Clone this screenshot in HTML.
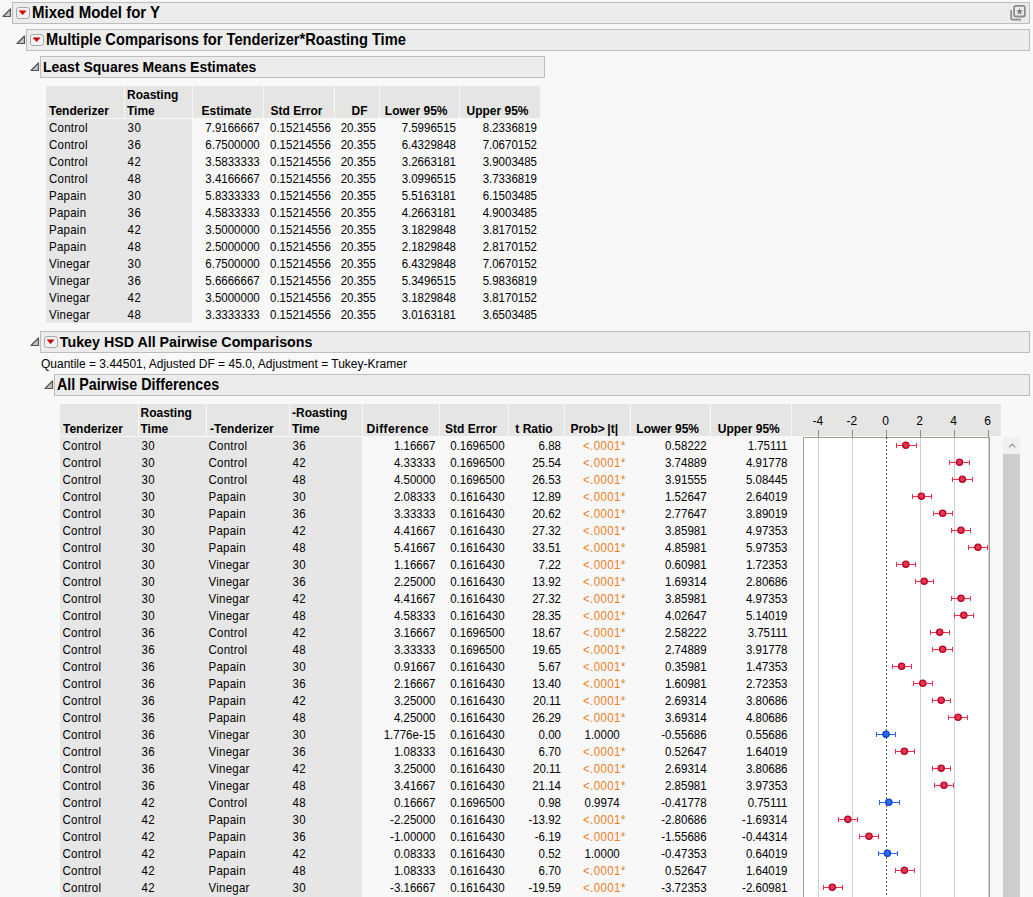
<!DOCTYPE html>
<html><head><meta charset="utf-8"><style>
html,body{margin:0;padding:0;}
body{width:1033px;height:897px;overflow:hidden;position:relative;background:#f8f8f8;font-family:"Liberation Sans", sans-serif;color:#000;}
.a{position:absolute;}
.t{position:absolute;white-space:nowrap;}
.ob{position:absolute;background:#ececec;border:1px solid #bdbdbd;}
</style></head><body>
<div class="ob" style="left:12px;top:2px;width:1016px;height:20px"></div>
<svg class="a" style="left:2px;top:8px" width="10" height="10" viewBox="0 0 10 10"><path d="M1 8.5 L8.5 1 L8.5 8.5 Z" fill="#c4c4c4" stroke="#555" stroke-width="1.2" stroke-linejoin="round"/></svg>
<svg class="a" style="left:16px;top:7px" width="14" height="12" viewBox="0 0 14 12"><rect x="0.5" y="0.5" width="13" height="11" rx="2.5" fill="#f2f2f2" stroke="#a9a9a9"/><path d="M2.6 3.6 L10.6 3.6 L6.6 8 Z" fill="#d00000"/></svg>
<div class="t" style="left:32px;top:1.80px;font-size:15px;line-height:22px;transform:scaleY(1.07);transform-origin:0 16.20px;font-weight:bold;">Mixed Model for Y</div>
<svg class="a" style="left:1010px;top:4px" width="18" height="18" viewBox="0 0 18 18"><path d="M1.1 6 V14.6 Q1.1 15.7 2.2 15.7 H11" fill="none" stroke="#8c8c8c" stroke-width="1.7" stroke-linecap="butt"/><rect x="4.1" y="1.9" width="10.7" height="10.6" rx="1.6" fill="#eeeeee" stroke="#8c8c8c" stroke-width="1.8"/><path d="M9.60 3.90 L10.51 6.35 L13.12 6.46 L11.07 8.08 L11.77 10.59 L9.60 9.15 L7.43 10.59 L8.13 8.08 L6.08 6.46 L8.69 6.35 Z" fill="#7c7c7c"/></svg>
<div class="ob" style="left:26px;top:29px;width:1002px;height:20px"></div>
<svg class="a" style="left:16px;top:35px" width="10" height="10" viewBox="0 0 10 10"><path d="M1 8.5 L8.5 1 L8.5 8.5 Z" fill="#c4c4c4" stroke="#555" stroke-width="1.2" stroke-linejoin="round"/></svg>
<svg class="a" style="left:30px;top:34px" width="14" height="12" viewBox="0 0 14 12"><rect x="0.5" y="0.5" width="13" height="11" rx="2.5" fill="#f2f2f2" stroke="#a9a9a9"/><path d="M2.6 3.6 L10.6 3.6 L6.6 8 Z" fill="#d00000"/></svg>
<div class="t" style="left:46px;top:28.92px;font-size:14.65px;line-height:22px;transform:scaleY(1.07);transform-origin:0 16.08px;font-weight:bold;">Multiple Comparisons for Tenderizer*Roasting Time</div>
<div class="ob" style="left:40px;top:56px;width:503px;height:20px"></div>
<svg class="a" style="left:30px;top:62px" width="10" height="10" viewBox="0 0 10 10"><path d="M1 8.5 L8.5 1 L8.5 8.5 Z" fill="#c4c4c4" stroke="#555" stroke-width="1.2" stroke-linejoin="round"/></svg>
<div class="t" style="left:43px;top:56.65px;font-size:14px;line-height:21px;transform:scaleY(1.11);transform-origin:0 15.35px;font-weight:bold;">Least Squares Means Estimates</div>
<div class="a" style="left:46px;top:86px;width:78px;height:32px;background:#e5e5e3"></div>
<div class="a" style="left:125px;top:86px;width:67px;height:32px;background:#e5e5e3"></div>
<div class="a" style="left:193px;top:86px;width:70px;height:32px;background:#e5e5e3"></div>
<div class="a" style="left:264px;top:86px;width:70px;height:32px;background:#e5e5e3"></div>
<div class="a" style="left:335px;top:86px;width:44px;height:32px;background:#e5e5e3"></div>
<div class="a" style="left:380px;top:86px;width:79px;height:32px;background:#e5e5e3"></div>
<div class="a" style="left:460px;top:86px;width:80px;height:32px;background:#e5e5e3"></div>
<div class="a" style="left:46px;top:119px;width:146px;height:204px;background:#e6e6e6"></div>
<div class="t" style="left:49px;top:101.84px;font-size:12px;line-height:18px;font-weight:bold;">Tenderizer</div>
<div class="t" style="left:127px;top:85.84px;font-size:12px;line-height:18px;font-weight:bold;">Roasting</div>
<div class="t" style="left:127px;top:101.84px;font-size:12px;line-height:18px;font-weight:bold;">Time</div>
<div class="t" style="left:51.5px;top:101.84px;font-size:12px;line-height:18px;font-weight:bold;width:200px;text-align:right;">Estimate</div>
<div class="t" style="left:122.5px;top:101.84px;font-size:12px;line-height:18px;font-weight:bold;width:200px;text-align:right;">Std Error</div>
<div class="t" style="left:167.5px;top:101.84px;font-size:12px;line-height:18px;font-weight:bold;width:200px;text-align:right;">DF</div>
<div class="t" style="left:247.5px;top:101.84px;font-size:12px;line-height:18px;font-weight:bold;width:200px;text-align:right;">Lower 95%</div>
<div class="t" style="left:328.5px;top:101.84px;font-size:12px;line-height:18px;font-weight:bold;width:200px;text-align:right;">Upper 95%</div>
<div class="t" style="left:49px;top:119.51px;font-size:11.5px;line-height:17px;transform:scaleY(1.09);transform-origin:0 12.49px;letter-spacing:0.25px;">Control</div>
<div class="t" style="left:127.5px;top:119.51px;font-size:11.5px;line-height:17px;transform:scaleY(1.09);transform-origin:0 12.49px;letter-spacing:0.5px;">30</div>
<div class="t" style="left:59.69999999999999px;top:119.51px;font-size:11.5px;line-height:17px;transform:scaleY(1.09);transform-origin:0 12.49px;width:200px;text-align:right;">7.9166667</div>
<div class="t" style="left:130.8px;top:119.51px;font-size:11.5px;line-height:17px;transform:scaleY(1.09);transform-origin:0 12.49px;width:200px;text-align:right;">0.15214556</div>
<div class="t" style="left:175.89999999999998px;top:119.51px;font-size:11.5px;line-height:17px;transform:scaleY(1.09);transform-origin:0 12.49px;width:200px;text-align:right;">20.355</div>
<div class="t" style="left:256px;top:119.51px;font-size:11.5px;line-height:17px;transform:scaleY(1.09);transform-origin:0 12.49px;width:200px;text-align:right;">7.5996515</div>
<div class="t" style="left:337px;top:119.51px;font-size:11.5px;line-height:17px;transform:scaleY(1.09);transform-origin:0 12.49px;width:200px;text-align:right;">8.2336819</div>
<div class="t" style="left:49px;top:136.51px;font-size:11.5px;line-height:17px;transform:scaleY(1.09);transform-origin:0 12.49px;letter-spacing:0.25px;">Control</div>
<div class="t" style="left:127.5px;top:136.51px;font-size:11.5px;line-height:17px;transform:scaleY(1.09);transform-origin:0 12.49px;letter-spacing:0.5px;">36</div>
<div class="t" style="left:59.69999999999999px;top:136.51px;font-size:11.5px;line-height:17px;transform:scaleY(1.09);transform-origin:0 12.49px;width:200px;text-align:right;">6.7500000</div>
<div class="t" style="left:130.8px;top:136.51px;font-size:11.5px;line-height:17px;transform:scaleY(1.09);transform-origin:0 12.49px;width:200px;text-align:right;">0.15214556</div>
<div class="t" style="left:175.89999999999998px;top:136.51px;font-size:11.5px;line-height:17px;transform:scaleY(1.09);transform-origin:0 12.49px;width:200px;text-align:right;">20.355</div>
<div class="t" style="left:256px;top:136.51px;font-size:11.5px;line-height:17px;transform:scaleY(1.09);transform-origin:0 12.49px;width:200px;text-align:right;">6.4329848</div>
<div class="t" style="left:337px;top:136.51px;font-size:11.5px;line-height:17px;transform:scaleY(1.09);transform-origin:0 12.49px;width:200px;text-align:right;">7.0670152</div>
<div class="t" style="left:49px;top:153.51px;font-size:11.5px;line-height:17px;transform:scaleY(1.09);transform-origin:0 12.49px;letter-spacing:0.25px;">Control</div>
<div class="t" style="left:127.5px;top:153.51px;font-size:11.5px;line-height:17px;transform:scaleY(1.09);transform-origin:0 12.49px;letter-spacing:0.5px;">42</div>
<div class="t" style="left:59.69999999999999px;top:153.51px;font-size:11.5px;line-height:17px;transform:scaleY(1.09);transform-origin:0 12.49px;width:200px;text-align:right;">3.5833333</div>
<div class="t" style="left:130.8px;top:153.51px;font-size:11.5px;line-height:17px;transform:scaleY(1.09);transform-origin:0 12.49px;width:200px;text-align:right;">0.15214556</div>
<div class="t" style="left:175.89999999999998px;top:153.51px;font-size:11.5px;line-height:17px;transform:scaleY(1.09);transform-origin:0 12.49px;width:200px;text-align:right;">20.355</div>
<div class="t" style="left:256px;top:153.51px;font-size:11.5px;line-height:17px;transform:scaleY(1.09);transform-origin:0 12.49px;width:200px;text-align:right;">3.2663181</div>
<div class="t" style="left:337px;top:153.51px;font-size:11.5px;line-height:17px;transform:scaleY(1.09);transform-origin:0 12.49px;width:200px;text-align:right;">3.9003485</div>
<div class="t" style="left:49px;top:170.51px;font-size:11.5px;line-height:17px;transform:scaleY(1.09);transform-origin:0 12.49px;letter-spacing:0.25px;">Control</div>
<div class="t" style="left:127.5px;top:170.51px;font-size:11.5px;line-height:17px;transform:scaleY(1.09);transform-origin:0 12.49px;letter-spacing:0.5px;">48</div>
<div class="t" style="left:59.69999999999999px;top:170.51px;font-size:11.5px;line-height:17px;transform:scaleY(1.09);transform-origin:0 12.49px;width:200px;text-align:right;">3.4166667</div>
<div class="t" style="left:130.8px;top:170.51px;font-size:11.5px;line-height:17px;transform:scaleY(1.09);transform-origin:0 12.49px;width:200px;text-align:right;">0.15214556</div>
<div class="t" style="left:175.89999999999998px;top:170.51px;font-size:11.5px;line-height:17px;transform:scaleY(1.09);transform-origin:0 12.49px;width:200px;text-align:right;">20.355</div>
<div class="t" style="left:256px;top:170.51px;font-size:11.5px;line-height:17px;transform:scaleY(1.09);transform-origin:0 12.49px;width:200px;text-align:right;">3.0996515</div>
<div class="t" style="left:337px;top:170.51px;font-size:11.5px;line-height:17px;transform:scaleY(1.09);transform-origin:0 12.49px;width:200px;text-align:right;">3.7336819</div>
<div class="t" style="left:49px;top:187.51px;font-size:11.5px;line-height:17px;transform:scaleY(1.09);transform-origin:0 12.49px;letter-spacing:0.25px;">Papain</div>
<div class="t" style="left:127.5px;top:187.51px;font-size:11.5px;line-height:17px;transform:scaleY(1.09);transform-origin:0 12.49px;letter-spacing:0.5px;">30</div>
<div class="t" style="left:59.69999999999999px;top:187.51px;font-size:11.5px;line-height:17px;transform:scaleY(1.09);transform-origin:0 12.49px;width:200px;text-align:right;">5.8333333</div>
<div class="t" style="left:130.8px;top:187.51px;font-size:11.5px;line-height:17px;transform:scaleY(1.09);transform-origin:0 12.49px;width:200px;text-align:right;">0.15214556</div>
<div class="t" style="left:175.89999999999998px;top:187.51px;font-size:11.5px;line-height:17px;transform:scaleY(1.09);transform-origin:0 12.49px;width:200px;text-align:right;">20.355</div>
<div class="t" style="left:256px;top:187.51px;font-size:11.5px;line-height:17px;transform:scaleY(1.09);transform-origin:0 12.49px;width:200px;text-align:right;">5.5163181</div>
<div class="t" style="left:337px;top:187.51px;font-size:11.5px;line-height:17px;transform:scaleY(1.09);transform-origin:0 12.49px;width:200px;text-align:right;">6.1503485</div>
<div class="t" style="left:49px;top:204.51px;font-size:11.5px;line-height:17px;transform:scaleY(1.09);transform-origin:0 12.49px;letter-spacing:0.25px;">Papain</div>
<div class="t" style="left:127.5px;top:204.51px;font-size:11.5px;line-height:17px;transform:scaleY(1.09);transform-origin:0 12.49px;letter-spacing:0.5px;">36</div>
<div class="t" style="left:59.69999999999999px;top:204.51px;font-size:11.5px;line-height:17px;transform:scaleY(1.09);transform-origin:0 12.49px;width:200px;text-align:right;">4.5833333</div>
<div class="t" style="left:130.8px;top:204.51px;font-size:11.5px;line-height:17px;transform:scaleY(1.09);transform-origin:0 12.49px;width:200px;text-align:right;">0.15214556</div>
<div class="t" style="left:175.89999999999998px;top:204.51px;font-size:11.5px;line-height:17px;transform:scaleY(1.09);transform-origin:0 12.49px;width:200px;text-align:right;">20.355</div>
<div class="t" style="left:256px;top:204.51px;font-size:11.5px;line-height:17px;transform:scaleY(1.09);transform-origin:0 12.49px;width:200px;text-align:right;">4.2663181</div>
<div class="t" style="left:337px;top:204.51px;font-size:11.5px;line-height:17px;transform:scaleY(1.09);transform-origin:0 12.49px;width:200px;text-align:right;">4.9003485</div>
<div class="t" style="left:49px;top:221.51px;font-size:11.5px;line-height:17px;transform:scaleY(1.09);transform-origin:0 12.49px;letter-spacing:0.25px;">Papain</div>
<div class="t" style="left:127.5px;top:221.51px;font-size:11.5px;line-height:17px;transform:scaleY(1.09);transform-origin:0 12.49px;letter-spacing:0.5px;">42</div>
<div class="t" style="left:59.69999999999999px;top:221.51px;font-size:11.5px;line-height:17px;transform:scaleY(1.09);transform-origin:0 12.49px;width:200px;text-align:right;">3.5000000</div>
<div class="t" style="left:130.8px;top:221.51px;font-size:11.5px;line-height:17px;transform:scaleY(1.09);transform-origin:0 12.49px;width:200px;text-align:right;">0.15214556</div>
<div class="t" style="left:175.89999999999998px;top:221.51px;font-size:11.5px;line-height:17px;transform:scaleY(1.09);transform-origin:0 12.49px;width:200px;text-align:right;">20.355</div>
<div class="t" style="left:256px;top:221.51px;font-size:11.5px;line-height:17px;transform:scaleY(1.09);transform-origin:0 12.49px;width:200px;text-align:right;">3.1829848</div>
<div class="t" style="left:337px;top:221.51px;font-size:11.5px;line-height:17px;transform:scaleY(1.09);transform-origin:0 12.49px;width:200px;text-align:right;">3.8170152</div>
<div class="t" style="left:49px;top:238.51px;font-size:11.5px;line-height:17px;transform:scaleY(1.09);transform-origin:0 12.49px;letter-spacing:0.25px;">Papain</div>
<div class="t" style="left:127.5px;top:238.51px;font-size:11.5px;line-height:17px;transform:scaleY(1.09);transform-origin:0 12.49px;letter-spacing:0.5px;">48</div>
<div class="t" style="left:59.69999999999999px;top:238.51px;font-size:11.5px;line-height:17px;transform:scaleY(1.09);transform-origin:0 12.49px;width:200px;text-align:right;">2.5000000</div>
<div class="t" style="left:130.8px;top:238.51px;font-size:11.5px;line-height:17px;transform:scaleY(1.09);transform-origin:0 12.49px;width:200px;text-align:right;">0.15214556</div>
<div class="t" style="left:175.89999999999998px;top:238.51px;font-size:11.5px;line-height:17px;transform:scaleY(1.09);transform-origin:0 12.49px;width:200px;text-align:right;">20.355</div>
<div class="t" style="left:256px;top:238.51px;font-size:11.5px;line-height:17px;transform:scaleY(1.09);transform-origin:0 12.49px;width:200px;text-align:right;">2.1829848</div>
<div class="t" style="left:337px;top:238.51px;font-size:11.5px;line-height:17px;transform:scaleY(1.09);transform-origin:0 12.49px;width:200px;text-align:right;">2.8170152</div>
<div class="t" style="left:49px;top:255.51px;font-size:11.5px;line-height:17px;transform:scaleY(1.09);transform-origin:0 12.49px;letter-spacing:0.25px;">Vinegar</div>
<div class="t" style="left:127.5px;top:255.51px;font-size:11.5px;line-height:17px;transform:scaleY(1.09);transform-origin:0 12.49px;letter-spacing:0.5px;">30</div>
<div class="t" style="left:59.69999999999999px;top:255.51px;font-size:11.5px;line-height:17px;transform:scaleY(1.09);transform-origin:0 12.49px;width:200px;text-align:right;">6.7500000</div>
<div class="t" style="left:130.8px;top:255.51px;font-size:11.5px;line-height:17px;transform:scaleY(1.09);transform-origin:0 12.49px;width:200px;text-align:right;">0.15214556</div>
<div class="t" style="left:175.89999999999998px;top:255.51px;font-size:11.5px;line-height:17px;transform:scaleY(1.09);transform-origin:0 12.49px;width:200px;text-align:right;">20.355</div>
<div class="t" style="left:256px;top:255.51px;font-size:11.5px;line-height:17px;transform:scaleY(1.09);transform-origin:0 12.49px;width:200px;text-align:right;">6.4329848</div>
<div class="t" style="left:337px;top:255.51px;font-size:11.5px;line-height:17px;transform:scaleY(1.09);transform-origin:0 12.49px;width:200px;text-align:right;">7.0670152</div>
<div class="t" style="left:49px;top:272.51px;font-size:11.5px;line-height:17px;transform:scaleY(1.09);transform-origin:0 12.49px;letter-spacing:0.25px;">Vinegar</div>
<div class="t" style="left:127.5px;top:272.51px;font-size:11.5px;line-height:17px;transform:scaleY(1.09);transform-origin:0 12.49px;letter-spacing:0.5px;">36</div>
<div class="t" style="left:59.69999999999999px;top:272.51px;font-size:11.5px;line-height:17px;transform:scaleY(1.09);transform-origin:0 12.49px;width:200px;text-align:right;">5.6666667</div>
<div class="t" style="left:130.8px;top:272.51px;font-size:11.5px;line-height:17px;transform:scaleY(1.09);transform-origin:0 12.49px;width:200px;text-align:right;">0.15214556</div>
<div class="t" style="left:175.89999999999998px;top:272.51px;font-size:11.5px;line-height:17px;transform:scaleY(1.09);transform-origin:0 12.49px;width:200px;text-align:right;">20.355</div>
<div class="t" style="left:256px;top:272.51px;font-size:11.5px;line-height:17px;transform:scaleY(1.09);transform-origin:0 12.49px;width:200px;text-align:right;">5.3496515</div>
<div class="t" style="left:337px;top:272.51px;font-size:11.5px;line-height:17px;transform:scaleY(1.09);transform-origin:0 12.49px;width:200px;text-align:right;">5.9836819</div>
<div class="t" style="left:49px;top:289.51px;font-size:11.5px;line-height:17px;transform:scaleY(1.09);transform-origin:0 12.49px;letter-spacing:0.25px;">Vinegar</div>
<div class="t" style="left:127.5px;top:289.51px;font-size:11.5px;line-height:17px;transform:scaleY(1.09);transform-origin:0 12.49px;letter-spacing:0.5px;">42</div>
<div class="t" style="left:59.69999999999999px;top:289.51px;font-size:11.5px;line-height:17px;transform:scaleY(1.09);transform-origin:0 12.49px;width:200px;text-align:right;">3.5000000</div>
<div class="t" style="left:130.8px;top:289.51px;font-size:11.5px;line-height:17px;transform:scaleY(1.09);transform-origin:0 12.49px;width:200px;text-align:right;">0.15214556</div>
<div class="t" style="left:175.89999999999998px;top:289.51px;font-size:11.5px;line-height:17px;transform:scaleY(1.09);transform-origin:0 12.49px;width:200px;text-align:right;">20.355</div>
<div class="t" style="left:256px;top:289.51px;font-size:11.5px;line-height:17px;transform:scaleY(1.09);transform-origin:0 12.49px;width:200px;text-align:right;">3.1829848</div>
<div class="t" style="left:337px;top:289.51px;font-size:11.5px;line-height:17px;transform:scaleY(1.09);transform-origin:0 12.49px;width:200px;text-align:right;">3.8170152</div>
<div class="t" style="left:49px;top:306.51px;font-size:11.5px;line-height:17px;transform:scaleY(1.09);transform-origin:0 12.49px;letter-spacing:0.25px;">Vinegar</div>
<div class="t" style="left:127.5px;top:306.51px;font-size:11.5px;line-height:17px;transform:scaleY(1.09);transform-origin:0 12.49px;letter-spacing:0.5px;">48</div>
<div class="t" style="left:59.69999999999999px;top:306.51px;font-size:11.5px;line-height:17px;transform:scaleY(1.09);transform-origin:0 12.49px;width:200px;text-align:right;">3.3333333</div>
<div class="t" style="left:130.8px;top:306.51px;font-size:11.5px;line-height:17px;transform:scaleY(1.09);transform-origin:0 12.49px;width:200px;text-align:right;">0.15214556</div>
<div class="t" style="left:175.89999999999998px;top:306.51px;font-size:11.5px;line-height:17px;transform:scaleY(1.09);transform-origin:0 12.49px;width:200px;text-align:right;">20.355</div>
<div class="t" style="left:256px;top:306.51px;font-size:11.5px;line-height:17px;transform:scaleY(1.09);transform-origin:0 12.49px;width:200px;text-align:right;">3.0163181</div>
<div class="t" style="left:337px;top:306.51px;font-size:11.5px;line-height:17px;transform:scaleY(1.09);transform-origin:0 12.49px;width:200px;text-align:right;">3.6503485</div>
<div class="ob" style="left:40px;top:331px;width:988px;height:20px"></div>
<svg class="a" style="left:30px;top:337px" width="10" height="10" viewBox="0 0 10 10"><path d="M1 8.5 L8.5 1 L8.5 8.5 Z" fill="#c4c4c4" stroke="#555" stroke-width="1.2" stroke-linejoin="round"/></svg>
<svg class="a" style="left:44px;top:336px" width="14" height="12" viewBox="0 0 14 12"><rect x="0.5" y="0.5" width="13" height="11" rx="2.5" fill="#f2f2f2" stroke="#a9a9a9"/><path d="M2.6 3.6 L10.6 3.6 L6.6 8 Z" fill="#d00000"/></svg>
<div class="t" style="left:59.8px;top:331.56px;font-size:14.25px;line-height:21px;transform:scaleY(1.07);transform-origin:0 15.44px;font-weight:bold;">Tukey HSD All Pairwise Comparisons</div>
<div class="t" style="left:41px;top:354.84px;font-size:12px;line-height:18px;">Quantile = 3.44501, Adjusted DF = 45.0, Adjustment = Tukey-Kramer</div>
<div class="ob" style="left:54px;top:374px;width:974px;height:20px"></div>
<svg class="a" style="left:44px;top:380px" width="10" height="10" viewBox="0 0 10 10"><path d="M1 8.5 L8.5 1 L8.5 8.5 Z" fill="#c4c4c4" stroke="#555" stroke-width="1.2" stroke-linejoin="round"/></svg>
<div class="t" style="left:57px;top:374.54px;font-size:14.3px;line-height:21px;transform:scaleY(1.1);transform-origin:0 15.46px;font-weight:bold;">All Pairwise Differences</div>
<div class="a" style="left:60px;top:404px;width:78px;height:32px;background:#e5e5e3"></div>
<div class="a" style="left:139px;top:404px;width:67px;height:32px;background:#e5e5e3"></div>
<div class="a" style="left:207px;top:404px;width:82px;height:32px;background:#e5e5e3"></div>
<div class="a" style="left:290px;top:404px;width:72px;height:32px;background:#e5e5e3"></div>
<div class="a" style="left:363px;top:404px;width:76px;height:32px;background:#e5e5e3"></div>
<div class="a" style="left:440px;top:404px;width:68px;height:32px;background:#e5e5e3"></div>
<div class="a" style="left:509px;top:404px;width:55px;height:32px;background:#e5e5e3"></div>
<div class="a" style="left:565px;top:404px;width:65px;height:32px;background:#e5e5e3"></div>
<div class="a" style="left:631px;top:404px;width:79px;height:32px;background:#e5e5e3"></div>
<div class="a" style="left:711px;top:404px;width:80px;height:32px;background:#e5e5e3"></div>
<div class="a" style="left:792px;top:404px;width:209px;height:32px;background:#e5e5e3"></div>
<div class="a" style="left:60px;top:437px;width:302px;height:460px;background:#e6e6e6"></div>
<div class="t" style="left:63px;top:419.84px;font-size:12px;line-height:18px;font-weight:bold;">Tenderizer</div>
<div class="t" style="left:140.5px;top:403.84px;font-size:12px;line-height:18px;font-weight:bold;">Roasting</div>
<div class="t" style="left:140.5px;top:419.84px;font-size:12px;line-height:18px;font-weight:bold;">Time</div>
<div class="t" style="left:210px;top:419.84px;font-size:12px;line-height:18px;font-weight:bold;">-Tenderizer</div>
<div class="t" style="left:292px;top:403.84px;font-size:12px;line-height:18px;font-weight:bold;">-Roasting</div>
<div class="t" style="left:292px;top:419.84px;font-size:12px;line-height:18px;font-weight:bold;">Time</div>
<div class="t" style="left:228.7px;top:419.84px;font-size:12px;line-height:18px;font-weight:bold;width:200px;text-align:right;"><span style="letter-spacing:0.35px">Difference</span></div>
<div class="t" style="left:297px;top:419.84px;font-size:12px;line-height:18px;font-weight:bold;width:200px;text-align:right;">Std Error</div>
<div class="t" style="left:352.70000000000005px;top:419.84px;font-size:12px;line-height:18px;font-weight:bold;width:200px;text-align:right;">t Ratio</div>
<div class="t" style="left:418px;top:419.84px;font-size:12px;line-height:18px;font-weight:bold;width:200px;text-align:right;">Prob&gt;<span style="margin-left:2.5px">|t|</span></div>
<div class="t" style="left:499px;top:419.84px;font-size:12px;line-height:18px;font-weight:bold;width:200px;text-align:right;">Lower 95%</div>
<div class="t" style="left:579.8px;top:419.84px;font-size:12px;line-height:18px;font-weight:bold;width:200px;text-align:right;">Upper 95%</div>
<div class="t" style="left:62.5px;top:437.51px;font-size:11.5px;line-height:17px;transform:scaleY(1.09);transform-origin:0 12.49px;letter-spacing:0.25px;">Control</div>
<div class="t" style="left:141.4px;top:437.51px;font-size:11.5px;line-height:17px;transform:scaleY(1.09);transform-origin:0 12.49px;letter-spacing:0.5px;">30</div>
<div class="t" style="left:208.5px;top:437.51px;font-size:11.5px;line-height:17px;transform:scaleY(1.09);transform-origin:0 12.49px;letter-spacing:0.25px;">Control</div>
<div class="t" style="left:292.4px;top:437.51px;font-size:11.5px;line-height:17px;transform:scaleY(1.09);transform-origin:0 12.49px;letter-spacing:0.5px;">36</div>
<div class="t" style="left:235.5px;top:437.51px;font-size:11.5px;line-height:17px;transform:scaleY(1.09);transform-origin:0 12.49px;width:200px;text-align:right;">1.16667</div>
<div class="t" style="left:304.6px;top:437.51px;font-size:11.5px;line-height:17px;transform:scaleY(1.09);transform-origin:0 12.49px;width:200px;text-align:right;">0.1696500</div>
<div class="t" style="left:361px;top:437.51px;font-size:11.5px;line-height:17px;transform:scaleY(1.09);transform-origin:0 12.49px;width:200px;text-align:right;">6.88</div>
<div class="t" style="left:583px;top:437.51px;font-size:11.5px;line-height:17px;transform:scaleY(1.09);transform-origin:0 12.49px;color:#ee7d1e;letter-spacing:0.4px;">&lt;.0001*</div>
<div class="t" style="left:506.6px;top:437.51px;font-size:11.5px;line-height:17px;transform:scaleY(1.09);transform-origin:0 12.49px;width:200px;text-align:right;">0.58222</div>
<div class="t" style="left:587.5px;top:437.51px;font-size:11.5px;line-height:17px;transform:scaleY(1.09);transform-origin:0 12.49px;width:200px;text-align:right;">1.75111</div>
<div class="t" style="left:62.5px;top:454.51px;font-size:11.5px;line-height:17px;transform:scaleY(1.09);transform-origin:0 12.49px;letter-spacing:0.25px;">Control</div>
<div class="t" style="left:141.4px;top:454.51px;font-size:11.5px;line-height:17px;transform:scaleY(1.09);transform-origin:0 12.49px;letter-spacing:0.5px;">30</div>
<div class="t" style="left:208.5px;top:454.51px;font-size:11.5px;line-height:17px;transform:scaleY(1.09);transform-origin:0 12.49px;letter-spacing:0.25px;">Control</div>
<div class="t" style="left:292.4px;top:454.51px;font-size:11.5px;line-height:17px;transform:scaleY(1.09);transform-origin:0 12.49px;letter-spacing:0.5px;">42</div>
<div class="t" style="left:235.5px;top:454.51px;font-size:11.5px;line-height:17px;transform:scaleY(1.09);transform-origin:0 12.49px;width:200px;text-align:right;">4.33333</div>
<div class="t" style="left:304.6px;top:454.51px;font-size:11.5px;line-height:17px;transform:scaleY(1.09);transform-origin:0 12.49px;width:200px;text-align:right;">0.1696500</div>
<div class="t" style="left:361px;top:454.51px;font-size:11.5px;line-height:17px;transform:scaleY(1.09);transform-origin:0 12.49px;width:200px;text-align:right;">25.54</div>
<div class="t" style="left:583px;top:454.51px;font-size:11.5px;line-height:17px;transform:scaleY(1.09);transform-origin:0 12.49px;color:#ee7d1e;letter-spacing:0.4px;">&lt;.0001*</div>
<div class="t" style="left:506.6px;top:454.51px;font-size:11.5px;line-height:17px;transform:scaleY(1.09);transform-origin:0 12.49px;width:200px;text-align:right;">3.74889</div>
<div class="t" style="left:587.5px;top:454.51px;font-size:11.5px;line-height:17px;transform:scaleY(1.09);transform-origin:0 12.49px;width:200px;text-align:right;">4.91778</div>
<div class="t" style="left:62.5px;top:471.51px;font-size:11.5px;line-height:17px;transform:scaleY(1.09);transform-origin:0 12.49px;letter-spacing:0.25px;">Control</div>
<div class="t" style="left:141.4px;top:471.51px;font-size:11.5px;line-height:17px;transform:scaleY(1.09);transform-origin:0 12.49px;letter-spacing:0.5px;">30</div>
<div class="t" style="left:208.5px;top:471.51px;font-size:11.5px;line-height:17px;transform:scaleY(1.09);transform-origin:0 12.49px;letter-spacing:0.25px;">Control</div>
<div class="t" style="left:292.4px;top:471.51px;font-size:11.5px;line-height:17px;transform:scaleY(1.09);transform-origin:0 12.49px;letter-spacing:0.5px;">48</div>
<div class="t" style="left:235.5px;top:471.51px;font-size:11.5px;line-height:17px;transform:scaleY(1.09);transform-origin:0 12.49px;width:200px;text-align:right;">4.50000</div>
<div class="t" style="left:304.6px;top:471.51px;font-size:11.5px;line-height:17px;transform:scaleY(1.09);transform-origin:0 12.49px;width:200px;text-align:right;">0.1696500</div>
<div class="t" style="left:361px;top:471.51px;font-size:11.5px;line-height:17px;transform:scaleY(1.09);transform-origin:0 12.49px;width:200px;text-align:right;">26.53</div>
<div class="t" style="left:583px;top:471.51px;font-size:11.5px;line-height:17px;transform:scaleY(1.09);transform-origin:0 12.49px;color:#ee7d1e;letter-spacing:0.4px;">&lt;.0001*</div>
<div class="t" style="left:506.6px;top:471.51px;font-size:11.5px;line-height:17px;transform:scaleY(1.09);transform-origin:0 12.49px;width:200px;text-align:right;">3.91555</div>
<div class="t" style="left:587.5px;top:471.51px;font-size:11.5px;line-height:17px;transform:scaleY(1.09);transform-origin:0 12.49px;width:200px;text-align:right;">5.08445</div>
<div class="t" style="left:62.5px;top:488.51px;font-size:11.5px;line-height:17px;transform:scaleY(1.09);transform-origin:0 12.49px;letter-spacing:0.25px;">Control</div>
<div class="t" style="left:141.4px;top:488.51px;font-size:11.5px;line-height:17px;transform:scaleY(1.09);transform-origin:0 12.49px;letter-spacing:0.5px;">30</div>
<div class="t" style="left:208.5px;top:488.51px;font-size:11.5px;line-height:17px;transform:scaleY(1.09);transform-origin:0 12.49px;letter-spacing:0.25px;">Papain</div>
<div class="t" style="left:292.4px;top:488.51px;font-size:11.5px;line-height:17px;transform:scaleY(1.09);transform-origin:0 12.49px;letter-spacing:0.5px;">30</div>
<div class="t" style="left:235.5px;top:488.51px;font-size:11.5px;line-height:17px;transform:scaleY(1.09);transform-origin:0 12.49px;width:200px;text-align:right;">2.08333</div>
<div class="t" style="left:304.6px;top:488.51px;font-size:11.5px;line-height:17px;transform:scaleY(1.09);transform-origin:0 12.49px;width:200px;text-align:right;">0.1616430</div>
<div class="t" style="left:361px;top:488.51px;font-size:11.5px;line-height:17px;transform:scaleY(1.09);transform-origin:0 12.49px;width:200px;text-align:right;">12.89</div>
<div class="t" style="left:583px;top:488.51px;font-size:11.5px;line-height:17px;transform:scaleY(1.09);transform-origin:0 12.49px;color:#ee7d1e;letter-spacing:0.4px;">&lt;.0001*</div>
<div class="t" style="left:506.6px;top:488.51px;font-size:11.5px;line-height:17px;transform:scaleY(1.09);transform-origin:0 12.49px;width:200px;text-align:right;">1.52647</div>
<div class="t" style="left:587.5px;top:488.51px;font-size:11.5px;line-height:17px;transform:scaleY(1.09);transform-origin:0 12.49px;width:200px;text-align:right;">2.64019</div>
<div class="t" style="left:62.5px;top:505.51px;font-size:11.5px;line-height:17px;transform:scaleY(1.09);transform-origin:0 12.49px;letter-spacing:0.25px;">Control</div>
<div class="t" style="left:141.4px;top:505.51px;font-size:11.5px;line-height:17px;transform:scaleY(1.09);transform-origin:0 12.49px;letter-spacing:0.5px;">30</div>
<div class="t" style="left:208.5px;top:505.51px;font-size:11.5px;line-height:17px;transform:scaleY(1.09);transform-origin:0 12.49px;letter-spacing:0.25px;">Papain</div>
<div class="t" style="left:292.4px;top:505.51px;font-size:11.5px;line-height:17px;transform:scaleY(1.09);transform-origin:0 12.49px;letter-spacing:0.5px;">36</div>
<div class="t" style="left:235.5px;top:505.51px;font-size:11.5px;line-height:17px;transform:scaleY(1.09);transform-origin:0 12.49px;width:200px;text-align:right;">3.33333</div>
<div class="t" style="left:304.6px;top:505.51px;font-size:11.5px;line-height:17px;transform:scaleY(1.09);transform-origin:0 12.49px;width:200px;text-align:right;">0.1616430</div>
<div class="t" style="left:361px;top:505.51px;font-size:11.5px;line-height:17px;transform:scaleY(1.09);transform-origin:0 12.49px;width:200px;text-align:right;">20.62</div>
<div class="t" style="left:583px;top:505.51px;font-size:11.5px;line-height:17px;transform:scaleY(1.09);transform-origin:0 12.49px;color:#ee7d1e;letter-spacing:0.4px;">&lt;.0001*</div>
<div class="t" style="left:506.6px;top:505.51px;font-size:11.5px;line-height:17px;transform:scaleY(1.09);transform-origin:0 12.49px;width:200px;text-align:right;">2.77647</div>
<div class="t" style="left:587.5px;top:505.51px;font-size:11.5px;line-height:17px;transform:scaleY(1.09);transform-origin:0 12.49px;width:200px;text-align:right;">3.89019</div>
<div class="t" style="left:62.5px;top:522.51px;font-size:11.5px;line-height:17px;transform:scaleY(1.09);transform-origin:0 12.49px;letter-spacing:0.25px;">Control</div>
<div class="t" style="left:141.4px;top:522.51px;font-size:11.5px;line-height:17px;transform:scaleY(1.09);transform-origin:0 12.49px;letter-spacing:0.5px;">30</div>
<div class="t" style="left:208.5px;top:522.51px;font-size:11.5px;line-height:17px;transform:scaleY(1.09);transform-origin:0 12.49px;letter-spacing:0.25px;">Papain</div>
<div class="t" style="left:292.4px;top:522.51px;font-size:11.5px;line-height:17px;transform:scaleY(1.09);transform-origin:0 12.49px;letter-spacing:0.5px;">42</div>
<div class="t" style="left:235.5px;top:522.51px;font-size:11.5px;line-height:17px;transform:scaleY(1.09);transform-origin:0 12.49px;width:200px;text-align:right;">4.41667</div>
<div class="t" style="left:304.6px;top:522.51px;font-size:11.5px;line-height:17px;transform:scaleY(1.09);transform-origin:0 12.49px;width:200px;text-align:right;">0.1616430</div>
<div class="t" style="left:361px;top:522.51px;font-size:11.5px;line-height:17px;transform:scaleY(1.09);transform-origin:0 12.49px;width:200px;text-align:right;">27.32</div>
<div class="t" style="left:583px;top:522.51px;font-size:11.5px;line-height:17px;transform:scaleY(1.09);transform-origin:0 12.49px;color:#ee7d1e;letter-spacing:0.4px;">&lt;.0001*</div>
<div class="t" style="left:506.6px;top:522.51px;font-size:11.5px;line-height:17px;transform:scaleY(1.09);transform-origin:0 12.49px;width:200px;text-align:right;">3.85981</div>
<div class="t" style="left:587.5px;top:522.51px;font-size:11.5px;line-height:17px;transform:scaleY(1.09);transform-origin:0 12.49px;width:200px;text-align:right;">4.97353</div>
<div class="t" style="left:62.5px;top:539.51px;font-size:11.5px;line-height:17px;transform:scaleY(1.09);transform-origin:0 12.49px;letter-spacing:0.25px;">Control</div>
<div class="t" style="left:141.4px;top:539.51px;font-size:11.5px;line-height:17px;transform:scaleY(1.09);transform-origin:0 12.49px;letter-spacing:0.5px;">30</div>
<div class="t" style="left:208.5px;top:539.51px;font-size:11.5px;line-height:17px;transform:scaleY(1.09);transform-origin:0 12.49px;letter-spacing:0.25px;">Papain</div>
<div class="t" style="left:292.4px;top:539.51px;font-size:11.5px;line-height:17px;transform:scaleY(1.09);transform-origin:0 12.49px;letter-spacing:0.5px;">48</div>
<div class="t" style="left:235.5px;top:539.51px;font-size:11.5px;line-height:17px;transform:scaleY(1.09);transform-origin:0 12.49px;width:200px;text-align:right;">5.41667</div>
<div class="t" style="left:304.6px;top:539.51px;font-size:11.5px;line-height:17px;transform:scaleY(1.09);transform-origin:0 12.49px;width:200px;text-align:right;">0.1616430</div>
<div class="t" style="left:361px;top:539.51px;font-size:11.5px;line-height:17px;transform:scaleY(1.09);transform-origin:0 12.49px;width:200px;text-align:right;">33.51</div>
<div class="t" style="left:583px;top:539.51px;font-size:11.5px;line-height:17px;transform:scaleY(1.09);transform-origin:0 12.49px;color:#ee7d1e;letter-spacing:0.4px;">&lt;.0001*</div>
<div class="t" style="left:506.6px;top:539.51px;font-size:11.5px;line-height:17px;transform:scaleY(1.09);transform-origin:0 12.49px;width:200px;text-align:right;">4.85981</div>
<div class="t" style="left:587.5px;top:539.51px;font-size:11.5px;line-height:17px;transform:scaleY(1.09);transform-origin:0 12.49px;width:200px;text-align:right;">5.97353</div>
<div class="t" style="left:62.5px;top:556.51px;font-size:11.5px;line-height:17px;transform:scaleY(1.09);transform-origin:0 12.49px;letter-spacing:0.25px;">Control</div>
<div class="t" style="left:141.4px;top:556.51px;font-size:11.5px;line-height:17px;transform:scaleY(1.09);transform-origin:0 12.49px;letter-spacing:0.5px;">30</div>
<div class="t" style="left:208.5px;top:556.51px;font-size:11.5px;line-height:17px;transform:scaleY(1.09);transform-origin:0 12.49px;letter-spacing:0.25px;">Vinegar</div>
<div class="t" style="left:292.4px;top:556.51px;font-size:11.5px;line-height:17px;transform:scaleY(1.09);transform-origin:0 12.49px;letter-spacing:0.5px;">30</div>
<div class="t" style="left:235.5px;top:556.51px;font-size:11.5px;line-height:17px;transform:scaleY(1.09);transform-origin:0 12.49px;width:200px;text-align:right;">1.16667</div>
<div class="t" style="left:304.6px;top:556.51px;font-size:11.5px;line-height:17px;transform:scaleY(1.09);transform-origin:0 12.49px;width:200px;text-align:right;">0.1616430</div>
<div class="t" style="left:361px;top:556.51px;font-size:11.5px;line-height:17px;transform:scaleY(1.09);transform-origin:0 12.49px;width:200px;text-align:right;">7.22</div>
<div class="t" style="left:583px;top:556.51px;font-size:11.5px;line-height:17px;transform:scaleY(1.09);transform-origin:0 12.49px;color:#ee7d1e;letter-spacing:0.4px;">&lt;.0001*</div>
<div class="t" style="left:506.6px;top:556.51px;font-size:11.5px;line-height:17px;transform:scaleY(1.09);transform-origin:0 12.49px;width:200px;text-align:right;">0.60981</div>
<div class="t" style="left:587.5px;top:556.51px;font-size:11.5px;line-height:17px;transform:scaleY(1.09);transform-origin:0 12.49px;width:200px;text-align:right;">1.72353</div>
<div class="t" style="left:62.5px;top:573.51px;font-size:11.5px;line-height:17px;transform:scaleY(1.09);transform-origin:0 12.49px;letter-spacing:0.25px;">Control</div>
<div class="t" style="left:141.4px;top:573.51px;font-size:11.5px;line-height:17px;transform:scaleY(1.09);transform-origin:0 12.49px;letter-spacing:0.5px;">30</div>
<div class="t" style="left:208.5px;top:573.51px;font-size:11.5px;line-height:17px;transform:scaleY(1.09);transform-origin:0 12.49px;letter-spacing:0.25px;">Vinegar</div>
<div class="t" style="left:292.4px;top:573.51px;font-size:11.5px;line-height:17px;transform:scaleY(1.09);transform-origin:0 12.49px;letter-spacing:0.5px;">36</div>
<div class="t" style="left:235.5px;top:573.51px;font-size:11.5px;line-height:17px;transform:scaleY(1.09);transform-origin:0 12.49px;width:200px;text-align:right;">2.25000</div>
<div class="t" style="left:304.6px;top:573.51px;font-size:11.5px;line-height:17px;transform:scaleY(1.09);transform-origin:0 12.49px;width:200px;text-align:right;">0.1616430</div>
<div class="t" style="left:361px;top:573.51px;font-size:11.5px;line-height:17px;transform:scaleY(1.09);transform-origin:0 12.49px;width:200px;text-align:right;">13.92</div>
<div class="t" style="left:583px;top:573.51px;font-size:11.5px;line-height:17px;transform:scaleY(1.09);transform-origin:0 12.49px;color:#ee7d1e;letter-spacing:0.4px;">&lt;.0001*</div>
<div class="t" style="left:506.6px;top:573.51px;font-size:11.5px;line-height:17px;transform:scaleY(1.09);transform-origin:0 12.49px;width:200px;text-align:right;">1.69314</div>
<div class="t" style="left:587.5px;top:573.51px;font-size:11.5px;line-height:17px;transform:scaleY(1.09);transform-origin:0 12.49px;width:200px;text-align:right;">2.80686</div>
<div class="t" style="left:62.5px;top:590.51px;font-size:11.5px;line-height:17px;transform:scaleY(1.09);transform-origin:0 12.49px;letter-spacing:0.25px;">Control</div>
<div class="t" style="left:141.4px;top:590.51px;font-size:11.5px;line-height:17px;transform:scaleY(1.09);transform-origin:0 12.49px;letter-spacing:0.5px;">30</div>
<div class="t" style="left:208.5px;top:590.51px;font-size:11.5px;line-height:17px;transform:scaleY(1.09);transform-origin:0 12.49px;letter-spacing:0.25px;">Vinegar</div>
<div class="t" style="left:292.4px;top:590.51px;font-size:11.5px;line-height:17px;transform:scaleY(1.09);transform-origin:0 12.49px;letter-spacing:0.5px;">42</div>
<div class="t" style="left:235.5px;top:590.51px;font-size:11.5px;line-height:17px;transform:scaleY(1.09);transform-origin:0 12.49px;width:200px;text-align:right;">4.41667</div>
<div class="t" style="left:304.6px;top:590.51px;font-size:11.5px;line-height:17px;transform:scaleY(1.09);transform-origin:0 12.49px;width:200px;text-align:right;">0.1616430</div>
<div class="t" style="left:361px;top:590.51px;font-size:11.5px;line-height:17px;transform:scaleY(1.09);transform-origin:0 12.49px;width:200px;text-align:right;">27.32</div>
<div class="t" style="left:583px;top:590.51px;font-size:11.5px;line-height:17px;transform:scaleY(1.09);transform-origin:0 12.49px;color:#ee7d1e;letter-spacing:0.4px;">&lt;.0001*</div>
<div class="t" style="left:506.6px;top:590.51px;font-size:11.5px;line-height:17px;transform:scaleY(1.09);transform-origin:0 12.49px;width:200px;text-align:right;">3.85981</div>
<div class="t" style="left:587.5px;top:590.51px;font-size:11.5px;line-height:17px;transform:scaleY(1.09);transform-origin:0 12.49px;width:200px;text-align:right;">4.97353</div>
<div class="t" style="left:62.5px;top:607.51px;font-size:11.5px;line-height:17px;transform:scaleY(1.09);transform-origin:0 12.49px;letter-spacing:0.25px;">Control</div>
<div class="t" style="left:141.4px;top:607.51px;font-size:11.5px;line-height:17px;transform:scaleY(1.09);transform-origin:0 12.49px;letter-spacing:0.5px;">30</div>
<div class="t" style="left:208.5px;top:607.51px;font-size:11.5px;line-height:17px;transform:scaleY(1.09);transform-origin:0 12.49px;letter-spacing:0.25px;">Vinegar</div>
<div class="t" style="left:292.4px;top:607.51px;font-size:11.5px;line-height:17px;transform:scaleY(1.09);transform-origin:0 12.49px;letter-spacing:0.5px;">48</div>
<div class="t" style="left:235.5px;top:607.51px;font-size:11.5px;line-height:17px;transform:scaleY(1.09);transform-origin:0 12.49px;width:200px;text-align:right;">4.58333</div>
<div class="t" style="left:304.6px;top:607.51px;font-size:11.5px;line-height:17px;transform:scaleY(1.09);transform-origin:0 12.49px;width:200px;text-align:right;">0.1616430</div>
<div class="t" style="left:361px;top:607.51px;font-size:11.5px;line-height:17px;transform:scaleY(1.09);transform-origin:0 12.49px;width:200px;text-align:right;">28.35</div>
<div class="t" style="left:583px;top:607.51px;font-size:11.5px;line-height:17px;transform:scaleY(1.09);transform-origin:0 12.49px;color:#ee7d1e;letter-spacing:0.4px;">&lt;.0001*</div>
<div class="t" style="left:506.6px;top:607.51px;font-size:11.5px;line-height:17px;transform:scaleY(1.09);transform-origin:0 12.49px;width:200px;text-align:right;">4.02647</div>
<div class="t" style="left:587.5px;top:607.51px;font-size:11.5px;line-height:17px;transform:scaleY(1.09);transform-origin:0 12.49px;width:200px;text-align:right;">5.14019</div>
<div class="t" style="left:62.5px;top:624.51px;font-size:11.5px;line-height:17px;transform:scaleY(1.09);transform-origin:0 12.49px;letter-spacing:0.25px;">Control</div>
<div class="t" style="left:141.4px;top:624.51px;font-size:11.5px;line-height:17px;transform:scaleY(1.09);transform-origin:0 12.49px;letter-spacing:0.5px;">36</div>
<div class="t" style="left:208.5px;top:624.51px;font-size:11.5px;line-height:17px;transform:scaleY(1.09);transform-origin:0 12.49px;letter-spacing:0.25px;">Control</div>
<div class="t" style="left:292.4px;top:624.51px;font-size:11.5px;line-height:17px;transform:scaleY(1.09);transform-origin:0 12.49px;letter-spacing:0.5px;">42</div>
<div class="t" style="left:235.5px;top:624.51px;font-size:11.5px;line-height:17px;transform:scaleY(1.09);transform-origin:0 12.49px;width:200px;text-align:right;">3.16667</div>
<div class="t" style="left:304.6px;top:624.51px;font-size:11.5px;line-height:17px;transform:scaleY(1.09);transform-origin:0 12.49px;width:200px;text-align:right;">0.1696500</div>
<div class="t" style="left:361px;top:624.51px;font-size:11.5px;line-height:17px;transform:scaleY(1.09);transform-origin:0 12.49px;width:200px;text-align:right;">18.67</div>
<div class="t" style="left:583px;top:624.51px;font-size:11.5px;line-height:17px;transform:scaleY(1.09);transform-origin:0 12.49px;color:#ee7d1e;letter-spacing:0.4px;">&lt;.0001*</div>
<div class="t" style="left:506.6px;top:624.51px;font-size:11.5px;line-height:17px;transform:scaleY(1.09);transform-origin:0 12.49px;width:200px;text-align:right;">2.58222</div>
<div class="t" style="left:587.5px;top:624.51px;font-size:11.5px;line-height:17px;transform:scaleY(1.09);transform-origin:0 12.49px;width:200px;text-align:right;">3.75111</div>
<div class="t" style="left:62.5px;top:641.51px;font-size:11.5px;line-height:17px;transform:scaleY(1.09);transform-origin:0 12.49px;letter-spacing:0.25px;">Control</div>
<div class="t" style="left:141.4px;top:641.51px;font-size:11.5px;line-height:17px;transform:scaleY(1.09);transform-origin:0 12.49px;letter-spacing:0.5px;">36</div>
<div class="t" style="left:208.5px;top:641.51px;font-size:11.5px;line-height:17px;transform:scaleY(1.09);transform-origin:0 12.49px;letter-spacing:0.25px;">Control</div>
<div class="t" style="left:292.4px;top:641.51px;font-size:11.5px;line-height:17px;transform:scaleY(1.09);transform-origin:0 12.49px;letter-spacing:0.5px;">48</div>
<div class="t" style="left:235.5px;top:641.51px;font-size:11.5px;line-height:17px;transform:scaleY(1.09);transform-origin:0 12.49px;width:200px;text-align:right;">3.33333</div>
<div class="t" style="left:304.6px;top:641.51px;font-size:11.5px;line-height:17px;transform:scaleY(1.09);transform-origin:0 12.49px;width:200px;text-align:right;">0.1696500</div>
<div class="t" style="left:361px;top:641.51px;font-size:11.5px;line-height:17px;transform:scaleY(1.09);transform-origin:0 12.49px;width:200px;text-align:right;">19.65</div>
<div class="t" style="left:583px;top:641.51px;font-size:11.5px;line-height:17px;transform:scaleY(1.09);transform-origin:0 12.49px;color:#ee7d1e;letter-spacing:0.4px;">&lt;.0001*</div>
<div class="t" style="left:506.6px;top:641.51px;font-size:11.5px;line-height:17px;transform:scaleY(1.09);transform-origin:0 12.49px;width:200px;text-align:right;">2.74889</div>
<div class="t" style="left:587.5px;top:641.51px;font-size:11.5px;line-height:17px;transform:scaleY(1.09);transform-origin:0 12.49px;width:200px;text-align:right;">3.91778</div>
<div class="t" style="left:62.5px;top:658.51px;font-size:11.5px;line-height:17px;transform:scaleY(1.09);transform-origin:0 12.49px;letter-spacing:0.25px;">Control</div>
<div class="t" style="left:141.4px;top:658.51px;font-size:11.5px;line-height:17px;transform:scaleY(1.09);transform-origin:0 12.49px;letter-spacing:0.5px;">36</div>
<div class="t" style="left:208.5px;top:658.51px;font-size:11.5px;line-height:17px;transform:scaleY(1.09);transform-origin:0 12.49px;letter-spacing:0.25px;">Papain</div>
<div class="t" style="left:292.4px;top:658.51px;font-size:11.5px;line-height:17px;transform:scaleY(1.09);transform-origin:0 12.49px;letter-spacing:0.5px;">30</div>
<div class="t" style="left:235.5px;top:658.51px;font-size:11.5px;line-height:17px;transform:scaleY(1.09);transform-origin:0 12.49px;width:200px;text-align:right;">0.91667</div>
<div class="t" style="left:304.6px;top:658.51px;font-size:11.5px;line-height:17px;transform:scaleY(1.09);transform-origin:0 12.49px;width:200px;text-align:right;">0.1616430</div>
<div class="t" style="left:361px;top:658.51px;font-size:11.5px;line-height:17px;transform:scaleY(1.09);transform-origin:0 12.49px;width:200px;text-align:right;">5.67</div>
<div class="t" style="left:583px;top:658.51px;font-size:11.5px;line-height:17px;transform:scaleY(1.09);transform-origin:0 12.49px;color:#ee7d1e;letter-spacing:0.4px;">&lt;.0001*</div>
<div class="t" style="left:506.6px;top:658.51px;font-size:11.5px;line-height:17px;transform:scaleY(1.09);transform-origin:0 12.49px;width:200px;text-align:right;">0.35981</div>
<div class="t" style="left:587.5px;top:658.51px;font-size:11.5px;line-height:17px;transform:scaleY(1.09);transform-origin:0 12.49px;width:200px;text-align:right;">1.47353</div>
<div class="t" style="left:62.5px;top:675.51px;font-size:11.5px;line-height:17px;transform:scaleY(1.09);transform-origin:0 12.49px;letter-spacing:0.25px;">Control</div>
<div class="t" style="left:141.4px;top:675.51px;font-size:11.5px;line-height:17px;transform:scaleY(1.09);transform-origin:0 12.49px;letter-spacing:0.5px;">36</div>
<div class="t" style="left:208.5px;top:675.51px;font-size:11.5px;line-height:17px;transform:scaleY(1.09);transform-origin:0 12.49px;letter-spacing:0.25px;">Papain</div>
<div class="t" style="left:292.4px;top:675.51px;font-size:11.5px;line-height:17px;transform:scaleY(1.09);transform-origin:0 12.49px;letter-spacing:0.5px;">36</div>
<div class="t" style="left:235.5px;top:675.51px;font-size:11.5px;line-height:17px;transform:scaleY(1.09);transform-origin:0 12.49px;width:200px;text-align:right;">2.16667</div>
<div class="t" style="left:304.6px;top:675.51px;font-size:11.5px;line-height:17px;transform:scaleY(1.09);transform-origin:0 12.49px;width:200px;text-align:right;">0.1616430</div>
<div class="t" style="left:361px;top:675.51px;font-size:11.5px;line-height:17px;transform:scaleY(1.09);transform-origin:0 12.49px;width:200px;text-align:right;">13.40</div>
<div class="t" style="left:583px;top:675.51px;font-size:11.5px;line-height:17px;transform:scaleY(1.09);transform-origin:0 12.49px;color:#ee7d1e;letter-spacing:0.4px;">&lt;.0001*</div>
<div class="t" style="left:506.6px;top:675.51px;font-size:11.5px;line-height:17px;transform:scaleY(1.09);transform-origin:0 12.49px;width:200px;text-align:right;">1.60981</div>
<div class="t" style="left:587.5px;top:675.51px;font-size:11.5px;line-height:17px;transform:scaleY(1.09);transform-origin:0 12.49px;width:200px;text-align:right;">2.72353</div>
<div class="t" style="left:62.5px;top:692.51px;font-size:11.5px;line-height:17px;transform:scaleY(1.09);transform-origin:0 12.49px;letter-spacing:0.25px;">Control</div>
<div class="t" style="left:141.4px;top:692.51px;font-size:11.5px;line-height:17px;transform:scaleY(1.09);transform-origin:0 12.49px;letter-spacing:0.5px;">36</div>
<div class="t" style="left:208.5px;top:692.51px;font-size:11.5px;line-height:17px;transform:scaleY(1.09);transform-origin:0 12.49px;letter-spacing:0.25px;">Papain</div>
<div class="t" style="left:292.4px;top:692.51px;font-size:11.5px;line-height:17px;transform:scaleY(1.09);transform-origin:0 12.49px;letter-spacing:0.5px;">42</div>
<div class="t" style="left:235.5px;top:692.51px;font-size:11.5px;line-height:17px;transform:scaleY(1.09);transform-origin:0 12.49px;width:200px;text-align:right;">3.25000</div>
<div class="t" style="left:304.6px;top:692.51px;font-size:11.5px;line-height:17px;transform:scaleY(1.09);transform-origin:0 12.49px;width:200px;text-align:right;">0.1616430</div>
<div class="t" style="left:361px;top:692.51px;font-size:11.5px;line-height:17px;transform:scaleY(1.09);transform-origin:0 12.49px;width:200px;text-align:right;">20.11</div>
<div class="t" style="left:583px;top:692.51px;font-size:11.5px;line-height:17px;transform:scaleY(1.09);transform-origin:0 12.49px;color:#ee7d1e;letter-spacing:0.4px;">&lt;.0001*</div>
<div class="t" style="left:506.6px;top:692.51px;font-size:11.5px;line-height:17px;transform:scaleY(1.09);transform-origin:0 12.49px;width:200px;text-align:right;">2.69314</div>
<div class="t" style="left:587.5px;top:692.51px;font-size:11.5px;line-height:17px;transform:scaleY(1.09);transform-origin:0 12.49px;width:200px;text-align:right;">3.80686</div>
<div class="t" style="left:62.5px;top:709.51px;font-size:11.5px;line-height:17px;transform:scaleY(1.09);transform-origin:0 12.49px;letter-spacing:0.25px;">Control</div>
<div class="t" style="left:141.4px;top:709.51px;font-size:11.5px;line-height:17px;transform:scaleY(1.09);transform-origin:0 12.49px;letter-spacing:0.5px;">36</div>
<div class="t" style="left:208.5px;top:709.51px;font-size:11.5px;line-height:17px;transform:scaleY(1.09);transform-origin:0 12.49px;letter-spacing:0.25px;">Papain</div>
<div class="t" style="left:292.4px;top:709.51px;font-size:11.5px;line-height:17px;transform:scaleY(1.09);transform-origin:0 12.49px;letter-spacing:0.5px;">48</div>
<div class="t" style="left:235.5px;top:709.51px;font-size:11.5px;line-height:17px;transform:scaleY(1.09);transform-origin:0 12.49px;width:200px;text-align:right;">4.25000</div>
<div class="t" style="left:304.6px;top:709.51px;font-size:11.5px;line-height:17px;transform:scaleY(1.09);transform-origin:0 12.49px;width:200px;text-align:right;">0.1616430</div>
<div class="t" style="left:361px;top:709.51px;font-size:11.5px;line-height:17px;transform:scaleY(1.09);transform-origin:0 12.49px;width:200px;text-align:right;">26.29</div>
<div class="t" style="left:583px;top:709.51px;font-size:11.5px;line-height:17px;transform:scaleY(1.09);transform-origin:0 12.49px;color:#ee7d1e;letter-spacing:0.4px;">&lt;.0001*</div>
<div class="t" style="left:506.6px;top:709.51px;font-size:11.5px;line-height:17px;transform:scaleY(1.09);transform-origin:0 12.49px;width:200px;text-align:right;">3.69314</div>
<div class="t" style="left:587.5px;top:709.51px;font-size:11.5px;line-height:17px;transform:scaleY(1.09);transform-origin:0 12.49px;width:200px;text-align:right;">4.80686</div>
<div class="t" style="left:62.5px;top:726.51px;font-size:11.5px;line-height:17px;transform:scaleY(1.09);transform-origin:0 12.49px;letter-spacing:0.25px;">Control</div>
<div class="t" style="left:141.4px;top:726.51px;font-size:11.5px;line-height:17px;transform:scaleY(1.09);transform-origin:0 12.49px;letter-spacing:0.5px;">36</div>
<div class="t" style="left:208.5px;top:726.51px;font-size:11.5px;line-height:17px;transform:scaleY(1.09);transform-origin:0 12.49px;letter-spacing:0.25px;">Vinegar</div>
<div class="t" style="left:292.4px;top:726.51px;font-size:11.5px;line-height:17px;transform:scaleY(1.09);transform-origin:0 12.49px;letter-spacing:0.5px;">30</div>
<div class="t" style="left:235.5px;top:726.51px;font-size:11.5px;line-height:17px;transform:scaleY(1.09);transform-origin:0 12.49px;width:200px;text-align:right;">1.776e-15</div>
<div class="t" style="left:304.6px;top:726.51px;font-size:11.5px;line-height:17px;transform:scaleY(1.09);transform-origin:0 12.49px;width:200px;text-align:right;">0.1616430</div>
<div class="t" style="left:361px;top:726.51px;font-size:11.5px;line-height:17px;transform:scaleY(1.09);transform-origin:0 12.49px;width:200px;text-align:right;">0.00</div>
<div class="t" style="left:584.5px;top:726.51px;font-size:11.5px;line-height:17px;transform:scaleY(1.09);transform-origin:0 12.49px;">1.0000</div>
<div class="t" style="left:506.6px;top:726.51px;font-size:11.5px;line-height:17px;transform:scaleY(1.09);transform-origin:0 12.49px;width:200px;text-align:right;">-0.55686</div>
<div class="t" style="left:587.5px;top:726.51px;font-size:11.5px;line-height:17px;transform:scaleY(1.09);transform-origin:0 12.49px;width:200px;text-align:right;">0.55686</div>
<div class="t" style="left:62.5px;top:743.51px;font-size:11.5px;line-height:17px;transform:scaleY(1.09);transform-origin:0 12.49px;letter-spacing:0.25px;">Control</div>
<div class="t" style="left:141.4px;top:743.51px;font-size:11.5px;line-height:17px;transform:scaleY(1.09);transform-origin:0 12.49px;letter-spacing:0.5px;">36</div>
<div class="t" style="left:208.5px;top:743.51px;font-size:11.5px;line-height:17px;transform:scaleY(1.09);transform-origin:0 12.49px;letter-spacing:0.25px;">Vinegar</div>
<div class="t" style="left:292.4px;top:743.51px;font-size:11.5px;line-height:17px;transform:scaleY(1.09);transform-origin:0 12.49px;letter-spacing:0.5px;">36</div>
<div class="t" style="left:235.5px;top:743.51px;font-size:11.5px;line-height:17px;transform:scaleY(1.09);transform-origin:0 12.49px;width:200px;text-align:right;">1.08333</div>
<div class="t" style="left:304.6px;top:743.51px;font-size:11.5px;line-height:17px;transform:scaleY(1.09);transform-origin:0 12.49px;width:200px;text-align:right;">0.1616430</div>
<div class="t" style="left:361px;top:743.51px;font-size:11.5px;line-height:17px;transform:scaleY(1.09);transform-origin:0 12.49px;width:200px;text-align:right;">6.70</div>
<div class="t" style="left:583px;top:743.51px;font-size:11.5px;line-height:17px;transform:scaleY(1.09);transform-origin:0 12.49px;color:#ee7d1e;letter-spacing:0.4px;">&lt;.0001*</div>
<div class="t" style="left:506.6px;top:743.51px;font-size:11.5px;line-height:17px;transform:scaleY(1.09);transform-origin:0 12.49px;width:200px;text-align:right;">0.52647</div>
<div class="t" style="left:587.5px;top:743.51px;font-size:11.5px;line-height:17px;transform:scaleY(1.09);transform-origin:0 12.49px;width:200px;text-align:right;">1.64019</div>
<div class="t" style="left:62.5px;top:760.51px;font-size:11.5px;line-height:17px;transform:scaleY(1.09);transform-origin:0 12.49px;letter-spacing:0.25px;">Control</div>
<div class="t" style="left:141.4px;top:760.51px;font-size:11.5px;line-height:17px;transform:scaleY(1.09);transform-origin:0 12.49px;letter-spacing:0.5px;">36</div>
<div class="t" style="left:208.5px;top:760.51px;font-size:11.5px;line-height:17px;transform:scaleY(1.09);transform-origin:0 12.49px;letter-spacing:0.25px;">Vinegar</div>
<div class="t" style="left:292.4px;top:760.51px;font-size:11.5px;line-height:17px;transform:scaleY(1.09);transform-origin:0 12.49px;letter-spacing:0.5px;">42</div>
<div class="t" style="left:235.5px;top:760.51px;font-size:11.5px;line-height:17px;transform:scaleY(1.09);transform-origin:0 12.49px;width:200px;text-align:right;">3.25000</div>
<div class="t" style="left:304.6px;top:760.51px;font-size:11.5px;line-height:17px;transform:scaleY(1.09);transform-origin:0 12.49px;width:200px;text-align:right;">0.1616430</div>
<div class="t" style="left:361px;top:760.51px;font-size:11.5px;line-height:17px;transform:scaleY(1.09);transform-origin:0 12.49px;width:200px;text-align:right;">20.11</div>
<div class="t" style="left:583px;top:760.51px;font-size:11.5px;line-height:17px;transform:scaleY(1.09);transform-origin:0 12.49px;color:#ee7d1e;letter-spacing:0.4px;">&lt;.0001*</div>
<div class="t" style="left:506.6px;top:760.51px;font-size:11.5px;line-height:17px;transform:scaleY(1.09);transform-origin:0 12.49px;width:200px;text-align:right;">2.69314</div>
<div class="t" style="left:587.5px;top:760.51px;font-size:11.5px;line-height:17px;transform:scaleY(1.09);transform-origin:0 12.49px;width:200px;text-align:right;">3.80686</div>
<div class="t" style="left:62.5px;top:777.51px;font-size:11.5px;line-height:17px;transform:scaleY(1.09);transform-origin:0 12.49px;letter-spacing:0.25px;">Control</div>
<div class="t" style="left:141.4px;top:777.51px;font-size:11.5px;line-height:17px;transform:scaleY(1.09);transform-origin:0 12.49px;letter-spacing:0.5px;">36</div>
<div class="t" style="left:208.5px;top:777.51px;font-size:11.5px;line-height:17px;transform:scaleY(1.09);transform-origin:0 12.49px;letter-spacing:0.25px;">Vinegar</div>
<div class="t" style="left:292.4px;top:777.51px;font-size:11.5px;line-height:17px;transform:scaleY(1.09);transform-origin:0 12.49px;letter-spacing:0.5px;">48</div>
<div class="t" style="left:235.5px;top:777.51px;font-size:11.5px;line-height:17px;transform:scaleY(1.09);transform-origin:0 12.49px;width:200px;text-align:right;">3.41667</div>
<div class="t" style="left:304.6px;top:777.51px;font-size:11.5px;line-height:17px;transform:scaleY(1.09);transform-origin:0 12.49px;width:200px;text-align:right;">0.1616430</div>
<div class="t" style="left:361px;top:777.51px;font-size:11.5px;line-height:17px;transform:scaleY(1.09);transform-origin:0 12.49px;width:200px;text-align:right;">21.14</div>
<div class="t" style="left:583px;top:777.51px;font-size:11.5px;line-height:17px;transform:scaleY(1.09);transform-origin:0 12.49px;color:#ee7d1e;letter-spacing:0.4px;">&lt;.0001*</div>
<div class="t" style="left:506.6px;top:777.51px;font-size:11.5px;line-height:17px;transform:scaleY(1.09);transform-origin:0 12.49px;width:200px;text-align:right;">2.85981</div>
<div class="t" style="left:587.5px;top:777.51px;font-size:11.5px;line-height:17px;transform:scaleY(1.09);transform-origin:0 12.49px;width:200px;text-align:right;">3.97353</div>
<div class="t" style="left:62.5px;top:794.51px;font-size:11.5px;line-height:17px;transform:scaleY(1.09);transform-origin:0 12.49px;letter-spacing:0.25px;">Control</div>
<div class="t" style="left:141.4px;top:794.51px;font-size:11.5px;line-height:17px;transform:scaleY(1.09);transform-origin:0 12.49px;letter-spacing:0.5px;">42</div>
<div class="t" style="left:208.5px;top:794.51px;font-size:11.5px;line-height:17px;transform:scaleY(1.09);transform-origin:0 12.49px;letter-spacing:0.25px;">Control</div>
<div class="t" style="left:292.4px;top:794.51px;font-size:11.5px;line-height:17px;transform:scaleY(1.09);transform-origin:0 12.49px;letter-spacing:0.5px;">48</div>
<div class="t" style="left:235.5px;top:794.51px;font-size:11.5px;line-height:17px;transform:scaleY(1.09);transform-origin:0 12.49px;width:200px;text-align:right;">0.16667</div>
<div class="t" style="left:304.6px;top:794.51px;font-size:11.5px;line-height:17px;transform:scaleY(1.09);transform-origin:0 12.49px;width:200px;text-align:right;">0.1696500</div>
<div class="t" style="left:361px;top:794.51px;font-size:11.5px;line-height:17px;transform:scaleY(1.09);transform-origin:0 12.49px;width:200px;text-align:right;">0.98</div>
<div class="t" style="left:584.5px;top:794.51px;font-size:11.5px;line-height:17px;transform:scaleY(1.09);transform-origin:0 12.49px;">0.9974</div>
<div class="t" style="left:506.6px;top:794.51px;font-size:11.5px;line-height:17px;transform:scaleY(1.09);transform-origin:0 12.49px;width:200px;text-align:right;">-0.41778</div>
<div class="t" style="left:587.5px;top:794.51px;font-size:11.5px;line-height:17px;transform:scaleY(1.09);transform-origin:0 12.49px;width:200px;text-align:right;">0.75111</div>
<div class="t" style="left:62.5px;top:811.51px;font-size:11.5px;line-height:17px;transform:scaleY(1.09);transform-origin:0 12.49px;letter-spacing:0.25px;">Control</div>
<div class="t" style="left:141.4px;top:811.51px;font-size:11.5px;line-height:17px;transform:scaleY(1.09);transform-origin:0 12.49px;letter-spacing:0.5px;">42</div>
<div class="t" style="left:208.5px;top:811.51px;font-size:11.5px;line-height:17px;transform:scaleY(1.09);transform-origin:0 12.49px;letter-spacing:0.25px;">Papain</div>
<div class="t" style="left:292.4px;top:811.51px;font-size:11.5px;line-height:17px;transform:scaleY(1.09);transform-origin:0 12.49px;letter-spacing:0.5px;">30</div>
<div class="t" style="left:235.5px;top:811.51px;font-size:11.5px;line-height:17px;transform:scaleY(1.09);transform-origin:0 12.49px;width:200px;text-align:right;">-2.25000</div>
<div class="t" style="left:304.6px;top:811.51px;font-size:11.5px;line-height:17px;transform:scaleY(1.09);transform-origin:0 12.49px;width:200px;text-align:right;">0.1616430</div>
<div class="t" style="left:361px;top:811.51px;font-size:11.5px;line-height:17px;transform:scaleY(1.09);transform-origin:0 12.49px;width:200px;text-align:right;">-13.92</div>
<div class="t" style="left:583px;top:811.51px;font-size:11.5px;line-height:17px;transform:scaleY(1.09);transform-origin:0 12.49px;color:#ee7d1e;letter-spacing:0.4px;">&lt;.0001*</div>
<div class="t" style="left:506.6px;top:811.51px;font-size:11.5px;line-height:17px;transform:scaleY(1.09);transform-origin:0 12.49px;width:200px;text-align:right;">-2.80686</div>
<div class="t" style="left:587.5px;top:811.51px;font-size:11.5px;line-height:17px;transform:scaleY(1.09);transform-origin:0 12.49px;width:200px;text-align:right;">-1.69314</div>
<div class="t" style="left:62.5px;top:828.51px;font-size:11.5px;line-height:17px;transform:scaleY(1.09);transform-origin:0 12.49px;letter-spacing:0.25px;">Control</div>
<div class="t" style="left:141.4px;top:828.51px;font-size:11.5px;line-height:17px;transform:scaleY(1.09);transform-origin:0 12.49px;letter-spacing:0.5px;">42</div>
<div class="t" style="left:208.5px;top:828.51px;font-size:11.5px;line-height:17px;transform:scaleY(1.09);transform-origin:0 12.49px;letter-spacing:0.25px;">Papain</div>
<div class="t" style="left:292.4px;top:828.51px;font-size:11.5px;line-height:17px;transform:scaleY(1.09);transform-origin:0 12.49px;letter-spacing:0.5px;">36</div>
<div class="t" style="left:235.5px;top:828.51px;font-size:11.5px;line-height:17px;transform:scaleY(1.09);transform-origin:0 12.49px;width:200px;text-align:right;">-1.00000</div>
<div class="t" style="left:304.6px;top:828.51px;font-size:11.5px;line-height:17px;transform:scaleY(1.09);transform-origin:0 12.49px;width:200px;text-align:right;">0.1616430</div>
<div class="t" style="left:361px;top:828.51px;font-size:11.5px;line-height:17px;transform:scaleY(1.09);transform-origin:0 12.49px;width:200px;text-align:right;">-6.19</div>
<div class="t" style="left:583px;top:828.51px;font-size:11.5px;line-height:17px;transform:scaleY(1.09);transform-origin:0 12.49px;color:#ee7d1e;letter-spacing:0.4px;">&lt;.0001*</div>
<div class="t" style="left:506.6px;top:828.51px;font-size:11.5px;line-height:17px;transform:scaleY(1.09);transform-origin:0 12.49px;width:200px;text-align:right;">-1.55686</div>
<div class="t" style="left:587.5px;top:828.51px;font-size:11.5px;line-height:17px;transform:scaleY(1.09);transform-origin:0 12.49px;width:200px;text-align:right;">-0.44314</div>
<div class="t" style="left:62.5px;top:845.51px;font-size:11.5px;line-height:17px;transform:scaleY(1.09);transform-origin:0 12.49px;letter-spacing:0.25px;">Control</div>
<div class="t" style="left:141.4px;top:845.51px;font-size:11.5px;line-height:17px;transform:scaleY(1.09);transform-origin:0 12.49px;letter-spacing:0.5px;">42</div>
<div class="t" style="left:208.5px;top:845.51px;font-size:11.5px;line-height:17px;transform:scaleY(1.09);transform-origin:0 12.49px;letter-spacing:0.25px;">Papain</div>
<div class="t" style="left:292.4px;top:845.51px;font-size:11.5px;line-height:17px;transform:scaleY(1.09);transform-origin:0 12.49px;letter-spacing:0.5px;">42</div>
<div class="t" style="left:235.5px;top:845.51px;font-size:11.5px;line-height:17px;transform:scaleY(1.09);transform-origin:0 12.49px;width:200px;text-align:right;">0.08333</div>
<div class="t" style="left:304.6px;top:845.51px;font-size:11.5px;line-height:17px;transform:scaleY(1.09);transform-origin:0 12.49px;width:200px;text-align:right;">0.1616430</div>
<div class="t" style="left:361px;top:845.51px;font-size:11.5px;line-height:17px;transform:scaleY(1.09);transform-origin:0 12.49px;width:200px;text-align:right;">0.52</div>
<div class="t" style="left:584.5px;top:845.51px;font-size:11.5px;line-height:17px;transform:scaleY(1.09);transform-origin:0 12.49px;">1.0000</div>
<div class="t" style="left:506.6px;top:845.51px;font-size:11.5px;line-height:17px;transform:scaleY(1.09);transform-origin:0 12.49px;width:200px;text-align:right;">-0.47353</div>
<div class="t" style="left:587.5px;top:845.51px;font-size:11.5px;line-height:17px;transform:scaleY(1.09);transform-origin:0 12.49px;width:200px;text-align:right;">0.64019</div>
<div class="t" style="left:62.5px;top:862.51px;font-size:11.5px;line-height:17px;transform:scaleY(1.09);transform-origin:0 12.49px;letter-spacing:0.25px;">Control</div>
<div class="t" style="left:141.4px;top:862.51px;font-size:11.5px;line-height:17px;transform:scaleY(1.09);transform-origin:0 12.49px;letter-spacing:0.5px;">42</div>
<div class="t" style="left:208.5px;top:862.51px;font-size:11.5px;line-height:17px;transform:scaleY(1.09);transform-origin:0 12.49px;letter-spacing:0.25px;">Papain</div>
<div class="t" style="left:292.4px;top:862.51px;font-size:11.5px;line-height:17px;transform:scaleY(1.09);transform-origin:0 12.49px;letter-spacing:0.5px;">48</div>
<div class="t" style="left:235.5px;top:862.51px;font-size:11.5px;line-height:17px;transform:scaleY(1.09);transform-origin:0 12.49px;width:200px;text-align:right;">1.08333</div>
<div class="t" style="left:304.6px;top:862.51px;font-size:11.5px;line-height:17px;transform:scaleY(1.09);transform-origin:0 12.49px;width:200px;text-align:right;">0.1616430</div>
<div class="t" style="left:361px;top:862.51px;font-size:11.5px;line-height:17px;transform:scaleY(1.09);transform-origin:0 12.49px;width:200px;text-align:right;">6.70</div>
<div class="t" style="left:583px;top:862.51px;font-size:11.5px;line-height:17px;transform:scaleY(1.09);transform-origin:0 12.49px;color:#ee7d1e;letter-spacing:0.4px;">&lt;.0001*</div>
<div class="t" style="left:506.6px;top:862.51px;font-size:11.5px;line-height:17px;transform:scaleY(1.09);transform-origin:0 12.49px;width:200px;text-align:right;">0.52647</div>
<div class="t" style="left:587.5px;top:862.51px;font-size:11.5px;line-height:17px;transform:scaleY(1.09);transform-origin:0 12.49px;width:200px;text-align:right;">1.64019</div>
<div class="t" style="left:62.5px;top:879.51px;font-size:11.5px;line-height:17px;transform:scaleY(1.09);transform-origin:0 12.49px;letter-spacing:0.25px;">Control</div>
<div class="t" style="left:141.4px;top:879.51px;font-size:11.5px;line-height:17px;transform:scaleY(1.09);transform-origin:0 12.49px;letter-spacing:0.5px;">42</div>
<div class="t" style="left:208.5px;top:879.51px;font-size:11.5px;line-height:17px;transform:scaleY(1.09);transform-origin:0 12.49px;letter-spacing:0.25px;">Vinegar</div>
<div class="t" style="left:292.4px;top:879.51px;font-size:11.5px;line-height:17px;transform:scaleY(1.09);transform-origin:0 12.49px;letter-spacing:0.5px;">30</div>
<div class="t" style="left:235.5px;top:879.51px;font-size:11.5px;line-height:17px;transform:scaleY(1.09);transform-origin:0 12.49px;width:200px;text-align:right;">-3.16667</div>
<div class="t" style="left:304.6px;top:879.51px;font-size:11.5px;line-height:17px;transform:scaleY(1.09);transform-origin:0 12.49px;width:200px;text-align:right;">0.1616430</div>
<div class="t" style="left:361px;top:879.51px;font-size:11.5px;line-height:17px;transform:scaleY(1.09);transform-origin:0 12.49px;width:200px;text-align:right;">-19.59</div>
<div class="t" style="left:583px;top:879.51px;font-size:11.5px;line-height:17px;transform:scaleY(1.09);transform-origin:0 12.49px;color:#ee7d1e;letter-spacing:0.4px;">&lt;.0001*</div>
<div class="t" style="left:506.6px;top:879.51px;font-size:11.5px;line-height:17px;transform:scaleY(1.09);transform-origin:0 12.49px;width:200px;text-align:right;">-3.72353</div>
<div class="t" style="left:587.5px;top:879.51px;font-size:11.5px;line-height:17px;transform:scaleY(1.09);transform-origin:0 12.49px;width:200px;text-align:right;">-2.60981</div>
<svg class="a" style="left:0;top:0" width="1033" height="897" viewBox="0 0 1033 897"><rect x="803.5" y="437.5" width="186" height="500" fill="#fff" stroke="#9c9e8e" stroke-width="1"/><line x1="818.5" y1="438" x2="818.5" y2="897" stroke="#cfcfcf" stroke-width="1"/><line x1="852.5" y1="438" x2="852.5" y2="897" stroke="#cfcfcf" stroke-width="1"/><line x1="920.5" y1="438" x2="920.5" y2="897" stroke="#cfcfcf" stroke-width="1"/><line x1="954.5" y1="438" x2="954.5" y2="897" stroke="#cfcfcf" stroke-width="1"/><line x1="988.5" y1="438" x2="988.5" y2="897" stroke="#cfcfcf" stroke-width="1"/><line x1="818.5" y1="430" x2="818.5" y2="437" stroke="#8c8c8c" stroke-width="1"/><line x1="852.5" y1="430" x2="852.5" y2="437" stroke="#8c8c8c" stroke-width="1"/><line x1="886.5" y1="430" x2="886.5" y2="437" stroke="#8c8c8c" stroke-width="1"/><line x1="920.5" y1="430" x2="920.5" y2="437" stroke="#8c8c8c" stroke-width="1"/><line x1="954.5" y1="430" x2="954.5" y2="437" stroke="#8c8c8c" stroke-width="1"/><line x1="988.5" y1="430" x2="988.5" y2="437" stroke="#8c8c8c" stroke-width="1"/><line x1="886.5" y1="437" x2="886.5" y2="897" stroke="#555" stroke-width="1" stroke-dasharray="2,2"/><path d="M896.5 445.5H916.5M896.5 443.0V448.0M916.5 443.0V448.0" stroke="#e8304c" stroke-width="1" fill="none"/><circle cx="905.8" cy="445.2" r="3.05" fill="#e9354f" stroke="#b8062a" stroke-width="1.4"/><path d="M949.5 462.5H969.5M949.5 460.0V465.0M969.5 460.0V465.0" stroke="#e8304c" stroke-width="1" fill="none"/><circle cx="959.5" cy="462.2" r="3.05" fill="#e9354f" stroke="#b8062a" stroke-width="1.4"/><path d="M952.5 479.5H972.5M952.5 477.0V482.0M972.5 477.0V482.0" stroke="#e8304c" stroke-width="1" fill="none"/><circle cx="962.4" cy="479.2" r="3.05" fill="#e9354f" stroke="#b8062a" stroke-width="1.4"/><path d="M912.5 496.5H931.5M912.5 494.0V499.0M931.5 494.0V499.0" stroke="#e8304c" stroke-width="1" fill="none"/><circle cx="921.4" cy="496.2" r="3.05" fill="#e9354f" stroke="#b8062a" stroke-width="1.4"/><path d="M933.5 513.5H952.5M933.5 511.0V516.0M952.5 511.0V516.0" stroke="#e8304c" stroke-width="1" fill="none"/><circle cx="942.6" cy="513.2" r="3.05" fill="#e9354f" stroke="#b8062a" stroke-width="1.4"/><path d="M951.5 530.5H970.5M951.5 528.0V533.0M970.5 528.0V533.0" stroke="#e8304c" stroke-width="1" fill="none"/><circle cx="961.0" cy="530.2" r="3.05" fill="#e9354f" stroke="#b8062a" stroke-width="1.4"/><path d="M968.5 547.5H987.5M968.5 545.0V550.0M987.5 545.0V550.0" stroke="#e8304c" stroke-width="1" fill="none"/><circle cx="977.9" cy="547.2" r="3.05" fill="#e9354f" stroke="#b8062a" stroke-width="1.4"/><path d="M896.5 564.5H915.5M896.5 562.0V567.0M915.5 562.0V567.0" stroke="#e8304c" stroke-width="1" fill="none"/><circle cx="905.8" cy="564.2" r="3.05" fill="#e9354f" stroke="#b8062a" stroke-width="1.4"/><path d="M915.5 581.5H933.5M915.5 579.0V584.0M933.5 579.0V584.0" stroke="#e8304c" stroke-width="1" fill="none"/><circle cx="924.2" cy="581.2" r="3.05" fill="#e9354f" stroke="#b8062a" stroke-width="1.4"/><path d="M951.5 598.5H970.5M951.5 596.0V601.0M970.5 596.0V601.0" stroke="#e8304c" stroke-width="1" fill="none"/><circle cx="961.0" cy="598.2" r="3.05" fill="#e9354f" stroke="#b8062a" stroke-width="1.4"/><path d="M954.5 615.5H973.5M954.5 613.0V618.0M973.5 613.0V618.0" stroke="#e8304c" stroke-width="1" fill="none"/><circle cx="963.8" cy="615.2" r="3.05" fill="#e9354f" stroke="#b8062a" stroke-width="1.4"/><path d="M930.5 632.5H949.5M930.5 630.0V635.0M949.5 630.0V635.0" stroke="#e8304c" stroke-width="1" fill="none"/><circle cx="939.7" cy="632.2" r="3.05" fill="#e9354f" stroke="#b8062a" stroke-width="1.4"/><path d="M932.5 649.5H952.5M932.5 647.0V652.0M952.5 647.0V652.0" stroke="#e8304c" stroke-width="1" fill="none"/><circle cx="942.6" cy="649.2" r="3.05" fill="#e9354f" stroke="#b8062a" stroke-width="1.4"/><path d="M892.5 666.5H911.5M892.5 664.0V669.0M911.5 664.0V669.0" stroke="#e8304c" stroke-width="1" fill="none"/><circle cx="901.6" cy="666.2" r="3.05" fill="#e9354f" stroke="#b8062a" stroke-width="1.4"/><path d="M913.5 683.5H932.5M913.5 681.0V686.0M932.5 681.0V686.0" stroke="#e8304c" stroke-width="1" fill="none"/><circle cx="922.8" cy="683.2" r="3.05" fill="#e9354f" stroke="#b8062a" stroke-width="1.4"/><path d="M932.5 700.5H950.5M932.5 698.0V703.0M950.5 698.0V703.0" stroke="#e8304c" stroke-width="1" fill="none"/><circle cx="941.2" cy="700.2" r="3.05" fill="#e9354f" stroke="#b8062a" stroke-width="1.4"/><path d="M948.5 717.5H967.5M948.5 715.0V720.0M967.5 715.0V720.0" stroke="#e8304c" stroke-width="1" fill="none"/><circle cx="958.1" cy="717.2" r="3.05" fill="#e9354f" stroke="#b8062a" stroke-width="1.4"/><path d="M876.5 734.5H895.5M876.5 732.0V737.0M895.5 732.0V737.0" stroke="#2a62ee" stroke-width="1" fill="none"/><circle cx="886.0" cy="734.2" r="3.05" fill="#2f6cf5" stroke="#0f44c8" stroke-width="1.4"/><path d="M895.5 751.5H914.5M895.5 749.0V754.0M914.5 749.0V754.0" stroke="#e8304c" stroke-width="1" fill="none"/><circle cx="904.4" cy="751.2" r="3.05" fill="#e9354f" stroke="#b8062a" stroke-width="1.4"/><path d="M932.5 768.5H950.5M932.5 766.0V771.0M950.5 766.0V771.0" stroke="#e8304c" stroke-width="1" fill="none"/><circle cx="941.2" cy="768.2" r="3.05" fill="#e9354f" stroke="#b8062a" stroke-width="1.4"/><path d="M934.5 785.5H953.5M934.5 783.0V788.0M953.5 783.0V788.0" stroke="#e8304c" stroke-width="1" fill="none"/><circle cx="944.0" cy="785.2" r="3.05" fill="#e9354f" stroke="#b8062a" stroke-width="1.4"/><path d="M879.5 802.5H899.5M879.5 800.0V805.0M899.5 800.0V805.0" stroke="#2a62ee" stroke-width="1" fill="none"/><circle cx="888.8" cy="802.2" r="3.05" fill="#2f6cf5" stroke="#0f44c8" stroke-width="1.4"/><path d="M838.5 819.5H857.5M838.5 817.0V822.0M857.5 817.0V822.0" stroke="#e8304c" stroke-width="1" fill="none"/><circle cx="847.8" cy="819.2" r="3.05" fill="#e9354f" stroke="#b8062a" stroke-width="1.4"/><path d="M859.5 836.5H878.5M859.5 834.0V839.0M878.5 834.0V839.0" stroke="#e8304c" stroke-width="1" fill="none"/><circle cx="869.0" cy="836.2" r="3.05" fill="#e9354f" stroke="#b8062a" stroke-width="1.4"/><path d="M878.5 853.5H897.5M878.5 851.0V856.0M897.5 851.0V856.0" stroke="#2a62ee" stroke-width="1" fill="none"/><circle cx="887.4" cy="853.2" r="3.05" fill="#2f6cf5" stroke="#0f44c8" stroke-width="1.4"/><path d="M895.5 870.5H914.5M895.5 868.0V873.0M914.5 868.0V873.0" stroke="#e8304c" stroke-width="1" fill="none"/><circle cx="904.4" cy="870.2" r="3.05" fill="#e9354f" stroke="#b8062a" stroke-width="1.4"/><path d="M823.5 887.5H842.5M823.5 885.0V890.0M842.5 885.0V890.0" stroke="#e8304c" stroke-width="1" fill="none"/><circle cx="832.3" cy="887.2" r="3.05" fill="#e9354f" stroke="#b8062a" stroke-width="1.4"/></svg>
<div class="t" style="left:787.8199999999999px;top:411.84px;font-size:12px;line-height:18px;width:60px;text-align:center;">-4</div>
<div class="t" style="left:821.7599999999999px;top:411.84px;font-size:12px;line-height:18px;width:60px;text-align:center;">-2</div>
<div class="t" style="left:855.6999999999999px;top:411.84px;font-size:12px;line-height:18px;width:60px;text-align:center;">0</div>
<div class="t" style="left:889.64px;top:411.84px;font-size:12px;line-height:18px;width:60px;text-align:center;">2</div>
<div class="t" style="left:923.5799999999999px;top:411.84px;font-size:12px;line-height:18px;width:60px;text-align:center;">4</div>
<div class="t" style="left:957.5199999999999px;top:411.84px;font-size:12px;line-height:18px;width:60px;text-align:center;">6</div>
<div class="a" style="left:1003px;top:437px;width:17px;height:17px;background:#f0f0f0"></div>
<svg class="a" style="left:1003px;top:437px" width="17" height="17" viewBox="0 0 17 17"><path d="M6.2 10.4 L9.2 7.2 L12.2 10.4" fill="none" stroke="#8e8e8e" stroke-width="1.15"/></svg>
<div class="a" style="left:1003px;top:454px;width:17px;height:443px;background:#cdcdcd"></div>
</body></html>
